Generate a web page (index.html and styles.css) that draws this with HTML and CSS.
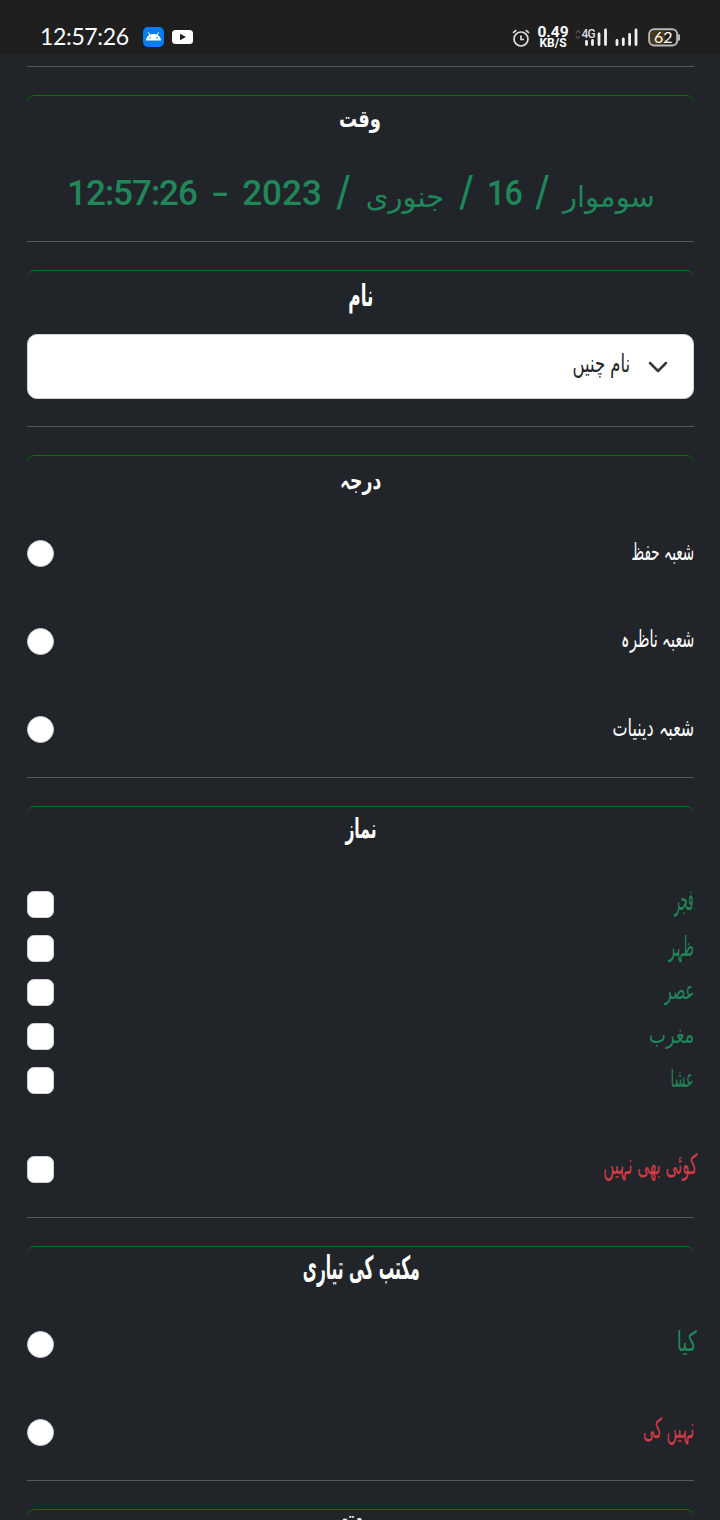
FILE: index.html
```html
<!DOCTYPE html>
<html lang="ur" dir="rtl">
<head>
<meta charset="utf-8">
<title>نماز</title>
<link rel="stylesheet" href="styles.css">
</head>
<body>
<header class="status" dir="ltr">
  <span class="clock">12:57:26</span>
  <svg class="android" width="21" height="20" viewBox="0 0 21 20"><rect width="21" height="20" rx="5" fill="#087cf5"/><path d="M3 13.400C3.300 9.600 6.200 7 10.500 7s7.200 2.600 7.500 6.400z" fill="#fff"/><path d="M7 8.200 5.300 5.300M14 8.200l1.700-2.900" stroke="#fff" stroke-width="1"/><circle cx="7" cy="10.800" r=".8" fill="#087cf5"/><circle cx="14" cy="10.800" r=".8" fill="#087cf5"/></svg>
  <svg class="tube" width="21" height="14" viewBox="0 0 21 14"><rect width="21" height="14" rx="3.500" fill="#fff"/><path d="M8 3.700v6.600L14 7z" fill="#1f1f1f"/></svg>
  <svg class="alarm" width="18" height="18" viewBox="0 0 18 18" fill="none" stroke="#ddd" stroke-width="1.700"><circle cx="9" cy="10" r="7"/><path d="M9 6.500V10.500h3M1 3.800 4.300 1.200M17 3.800 13.700 1.200"/></svg>
  <span class="speed"><b>0.49</b><small>KB/S</small></span>
  <svg class="signal" width="33" height="20" viewBox="0 0 33 20"><path d="m1 6 2-2.500L5 6M1 9l2 2.500L5 9" fill="none" stroke="#555" stroke-width="1.200"/><path d="M11.500 14.500v3M17.500 13.500v4M24 7v10.500M30.500 3v14.500" stroke="#eee" stroke-width="2.800" stroke-linecap="round"/><text x="6.500" y="11" class="net">4G</text></svg>
  <svg class="signal two" width="24" height="20" viewBox="0 0 24 20"><path d="M2 13.500v4M8.300 12v5.500M14.600 7.500v10M21 3v14.500" stroke="#eee" stroke-width="2.800" stroke-linecap="round"/></svg>
  <svg class="battery" width="33" height="19" viewBox="0 0 33 19"><rect x="1.200" y="1.200" width="28" height="16.300" rx="5" fill="#1f1f1f" stroke="#b9b9b9" stroke-width="2"/><path d="M5 3h12v13H5q-2 0-2-2V5q0-2 2-2" fill="#4a3514"/><path d="M31 6.500v6" stroke="#b9b9b9" stroke-width="2"/><text x="15.300" y="15" class="charge">62</text></svg>
</header>
<main>
  <hr>
  <section class="time">
    <h2><span class="w-waqt">وقت</span></h2>
    <div class="date"><span class="ar day">سوموار</span><span class="slash">/</span><span class="num d16">16</span><span class="slash">/</span><span class="ar month">جنوری</span><span class="slash">/</span><span class="num year">2023</span><span class="num dash">-</span><span class="num now" dir="ltr">12:57:26</span></div>
  </section>
  <hr>
  <section class="name">
    <h2><span class="w-naam">نام</span></h2>
    <div class="select"><svg width="20" height="12" viewBox="0 0 20 12"><path d="m2 2 8 8 8-8" fill="none" stroke="#343a40" stroke-width="2.500" stroke-linecap="round" stroke-linejoin="round"/></svg><span class="w-pick">نام چنیں</span></div>
  </section>
  <hr>
  <section class="grade">
    <h2><span class="w-darja">درجہ</span></h2>
    <label class="row"><span class="w-hifz">شعبہ حفظ</span><i class="radio"></i></label>
    <label class="row"><span class="w-nazra">شعبہ ناظرہ</span><i class="radio"></i></label>
    <label class="row"><span class="w-deen">شعبہ دینیات</span><i class="radio"></i></label>
  </section>
  <hr>
  <section class="prayer">
    <h2><span class="w-namaz">نماز</span></h2>
    <label class="row green"><span class="w-fajr">فجر</span><i class="check"></i></label>
    <label class="row green"><span class="w-zuhr">ظہر</span><i class="check"></i></label>
    <label class="row green"><span class="w-asr">عصر</span><i class="check"></i></label>
    <label class="row green"><span class="w-maghrib">مغرب</span><i class="check"></i></label>
    <label class="row green"><span class="w-isha">عشا</span><i class="check"></i></label>
    <label class="row red none"><span class="w-none">کوئی بھی نہیں</span><i class="check"></i></label>
  </section>
  <hr>
  <section class="study">
    <h2><span class="w-maktab">مکتب کی تیاری</span></h2>
    <label class="row green"><span class="w-kiya">کیا</span><i class="radio"></i></label>
    <label class="row red"><span class="w-nahi">نہیں کی</span><i class="radio"></i></label>
  </section>
  <hr>
  <section class="next"><h2><span class="w-next">ت</span></h2></section>
</main>
</body>
</html>
```
FILE: styles.css
```css
* { box-sizing: border-box; }
html, body { margin: 0; height: 1520px; overflow: hidden; }
body { background: #212529; color: #fff; font-family: "DejaVu Sans", sans-serif; }
.status { height: 54px; padding: 20px 39px 0 40px; background: #1f1f1f; display: flex; align-items: center; font-family: Roboto, sans-serif; }
.status svg { flex: none; }
.clock { width: 103px; font: 23px/34px Lato, sans-serif; letter-spacing: -.35px; white-space: nowrap; margin-top: -2px; }
.tube { margin-left: 8px; }
.alarm { margin-left: auto; margin-top: 2px; }
.speed { width: 32px; margin-left: 7px; display: flex; flex-direction: column; align-items: center; margin-top: 0; }
.speed b { font-size: 15.500px; line-height: 12px; }
.speed small { font-size: 12px; font-weight: 700; line-height: 11px; }
.signal { margin-left: 6px; margin-top: -1px; }
.signal.two { margin-left: 7px; }
.net { font: 500 12px Roboto, sans-serif; fill: #ddd; letter-spacing: -.9px; direction: ltr; stroke: #1f1f1f; stroke-width: 2px; paint-order: stroke; }
.battery { margin-left: 9px; }
.charge { font: 16px Lato, sans-serif; fill: #fff; text-anchor: middle; }
main { padding: 12px 26px 0 27px; }
hr { height: 1px; margin: 0 0 28px; border: 0; background: #56595b; }
section { border-top: 1px solid #0b730b; border-radius: 8px; }
h2 { margin: 0; height: 50px; display: flex; justify-content: center; align-items: center; font-size: 24px; font-weight: 700; }
h2 span, .row span, .select span { white-space: nowrap; line-height: 1; }
.time { height: 146px; }
.name { height: 156px; }
.grade { height: 322px; }
.prayer { height: 411px; }
.study { height: 234px; }
.date { height: 92px; display: flex; justify-content: center; align-items: center; gap: 15px; color: #20875a; }
.date span { display: flex; justify-content: center; white-space: nowrap; line-height: 1; }
.date .num { font: 500 35px Roboto, sans-serif; letter-spacing: -1px; padding-top: 3px; }
.date .slash { width: 13px; font: 500 44px/1 Roboto, sans-serif; transform: scaleX(.82); }
.ar { font-size: 29px; padding-top: 10px; }
.day { width: 90px; }
.month { width: 80px; }
.d16 { width: 33px; transform: scaleX(.92); }
.date .year { width: 80px; letter-spacing: 0; }
.dash { width: 15px; transform: scaleX(1.500); }
.now { width: 130px; }
.select { height: 65px; margin-top: 13px; padding: 0 25px; border: 1px solid #ced4da; border-radius: 10px; background: #fff; color: #212529; display: flex; align-items: center; gap: 18px; font-size: 20px; }
.row { height: 44px; display: flex; align-items: center; justify-content: space-between; font-size: 20px; }
.row span, .select span { transform-origin: right center; }
.grade .row, .study .row { height: 88px; }
.grade h2 { height: 53px; }
.prayer h2 { height: 44px; margin-bottom: 31px; }
.study h2 { height: 53px; }
.row.none { margin-top: 45px; }
.next h2 { height: 22px; }
.radio, .check { width: 27px; height: 27px; background: #fff; border: 1px solid #d0d2d4; border-radius: 50%; }
.check { border-radius: 7px; }
.green { color: #20875a; }
.red { color: #d53b49; }

/* narrow, tall word shapes */
.w-waqt { transform: translateY(-2px) scale(.75, 1); }
.w-naam { transform: scale(.7, 1.250); }
.w-darja { transform: translateY(-2px) scale(.72, 1); }
.w-namaz { transform: scale(.65, 1.150); }
.w-maktab { transform: translate(1px, -6px) scale(.64, 1.350); }
.w-next { transform: translate(-8px, -3px) scale(.9, 1); }
.row .w-hifz { transform: translateY(-1px) scale(.68, 1.200); }
.row .w-nazra { transform: translateY(-2px) scale(.72, 1.200); }
.row .w-deen { transform: translateY(-1px) scale(.8, 1.200); }
.row .w-fajr { transform: translateY(-5px) scale(.57, 1.500); }
.row .w-zuhr { transform: translateY(-1px) scale(.65, 1.350); }
.row .w-asr { transform: translateY(-2px) scale(.74, 1.300); }
.row .w-maghrib { transform: translateY(-1px) scale(.9, 1.200); }
.row .w-isha { transform: translateY(-1px) scale(.65, 1.200); }
.row .w-none { transform: translate(3px, -5px) scale(.75, 1.400); }
.row .w-kiya { transform: translate(3px, -3px) scale(.92, 1.400); }
.row .w-nahi { transform: translateY(-4px) scale(.72, 1.400); }
.select .w-pick { transform: translateY(-4px) scale(.82, 1.250); }
```
